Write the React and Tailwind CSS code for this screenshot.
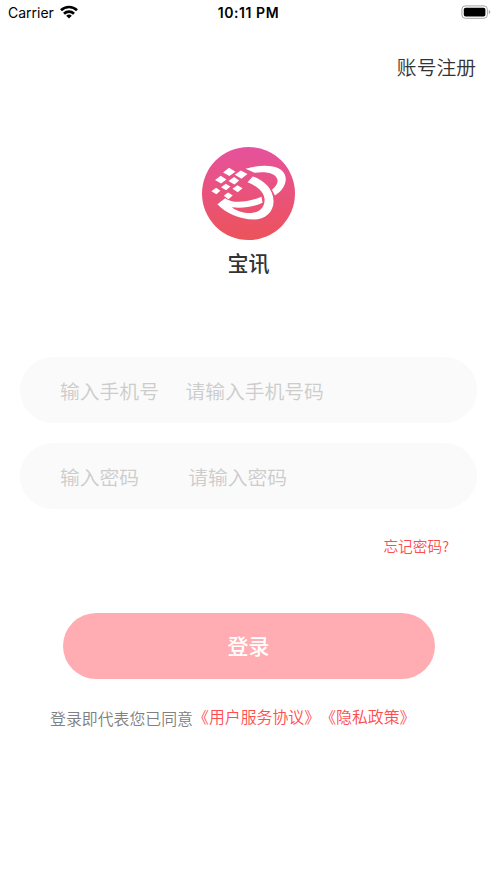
import clsx from 'clsx';

const FIELDS = [
  { id: 'phone', label: '输入手机号', placeholder: '请输入手机号码', gap: 'ml-[26.5px]' },
  { id: 'password', label: '输入密码', placeholder: '请输入密码', gap: 'ml-[49px]' },
];

export default function App() {
  return (
    <div className="flex h-[883px] w-[497px] flex-col overflow-hidden bg-white font-['Noto_Sans_CJK_SC',sans-serif] font-[350]">
      <StatusBar />

      <header className="mt-[27px] flex h-[30px] items-center justify-end pr-[21px]">
        <button className="text-[19.8px] leading-[30px] text-[#333]">账号注册</button>
      </header>

      <main className="flex flex-col">
        <div className="mt-[65px] flex flex-col items-center">
          <Logo />
          <h1 className="mt-[7px] text-[21px] leading-[30px] font-medium text-[#333]">宝讯</h1>
        </div>

        <form className="mt-[80px] flex flex-col gap-[20px] px-5">
          {FIELDS.map(f => (
            <Field key={f.id} {...f} />
          ))}
        </form>

        <div className="mt-[26px] flex justify-end pr-[48px]">
          <button className="text-[14.7px] leading-[22px] text-[#ff4d4f]">忘记密码?</button>
        </div>

        <button className="mx-auto mt-[56px] h-[66px] w-[372px] rounded-full bg-[#ffadb3] text-[21px] font-medium text-white">
          登录
        </button>

        <p className="mt-[26px] flex items-start pl-[50px] text-[15.9px] leading-6 whitespace-nowrap">
          <span className="pt-[2px] text-[#808080]">登录即代表您已同意</span>
          <a className="text-[#ff4d4f]">《用户服务协议》</a>
          <a className="text-[#ff4d4f]">《隐私政策》</a>
        </p>
      </main>
    </div>
  );
}

function Field({ label, placeholder, gap }) {
  return (
    <label className="flex h-[66px] items-center rounded-full bg-[#fafafa] pt-[2px] pl-[40px] text-[19.8px] leading-[30px] text-[#ccc]">
      <span className="shrink-0">{label}</span>
      <span className={clsx('shrink-0', gap)}>{placeholder}</span>
    </label>
  );
}

function StatusBar() {
  return (
    <div className="grid h-[25px] grid-cols-3 items-center px-[8px] font-['Inter',sans-serif] text-[14px] font-normal text-black">
      <div className="flex items-center gap-[6px]">
        <span>Carrier</span>
        <svg className="mb-[1px] h-[14px] w-[18px]" viewBox="0 0 18 14" fill="none" stroke="currentColor" strokeWidth="2.7">
          <path d="M1 5.2a11.6 11.6 0 0 1 16 0" />
          <path d="M4 8.7a7.2 7.2 0 0 1 10 0" />
          <path d="M9 13.6 6.2 10.8a4 4 0 0 1 5.6 0Z" fill="currentColor" stroke="none" />
        </svg>
      </div>
      <span className="text-center font-semibold tracking-[0.55px]">10:11 PM</span>
      <svg className="-mr-[2px] mb-[1px] h-[14px] w-[30px] justify-self-end" viewBox="0 0 30 14">
        <rect x="0.9" y="0.9" width="25.5" height="12.4" rx="3.5" fill="none" stroke="#a6a6a6" />
        <rect x="2.8" y="2.7" width="21.6" height="8.8" rx="1.8" />
        <path d="M27.8 5v4q1.5-.6 1.5-2t-1.5-2Z" fill="#a6a6a6" />
      </svg>
    </div>
  );
}

function Logo() {
  return (
    <svg className="h-[93px] w-[93px]" viewBox="21 21 278 278">
      <defs>
        <linearGradient id="logo-bg" x1="0" y1="0" x2="0" y2="1">
          <stop offset="0" stopColor="#e6529d" />
          <stop offset="1" stopColor="#ec535a" />
        </linearGradient>
      </defs>
      <circle cx="160" cy="160" r="139" fill="url(#logo-bg)" />
      <g fill="#fff">
        {/* pixel trail */}
        <path d="m102 83 19 12-18 13-19-11Z" />
        <path d="m137 91 20 11-18 14-20-12Z" />
        <path d="m77 107 17 11-16 12-18-10Z" />
        <path d="m117 111 15 10-14 12-18-10Z" />
        <path d="m92 131 14 8-13 11-15-9Z" />
        <path d="m127 135 15 9-14 12-16-10Z" />
        <path d="m63 143 13 9-12 10-15-9Z" />
        <path d="m99 157 14 9-13 11-14-10Z" />
        {/* orbit */}
        <path d="M151 86C175 78 206 75 233 79C262 85 276 103 270 127C265 145 253 157 239 166L230 149C241 140 247 131 247 121C244 99 213 93 178 98Z" />
        <path d="M173 109C207 121 234 147 235 183C235 217 208 238 175 238C135 237 92 219 67 192L90 174C112 190 154 188 199 170L202 188C177 200 141 205 110 201C126 214 148 219 169 218C194 216 209 199 208 177C206 155 186 138 157 126Z" />
      </g>
    </svg>
  );
}
